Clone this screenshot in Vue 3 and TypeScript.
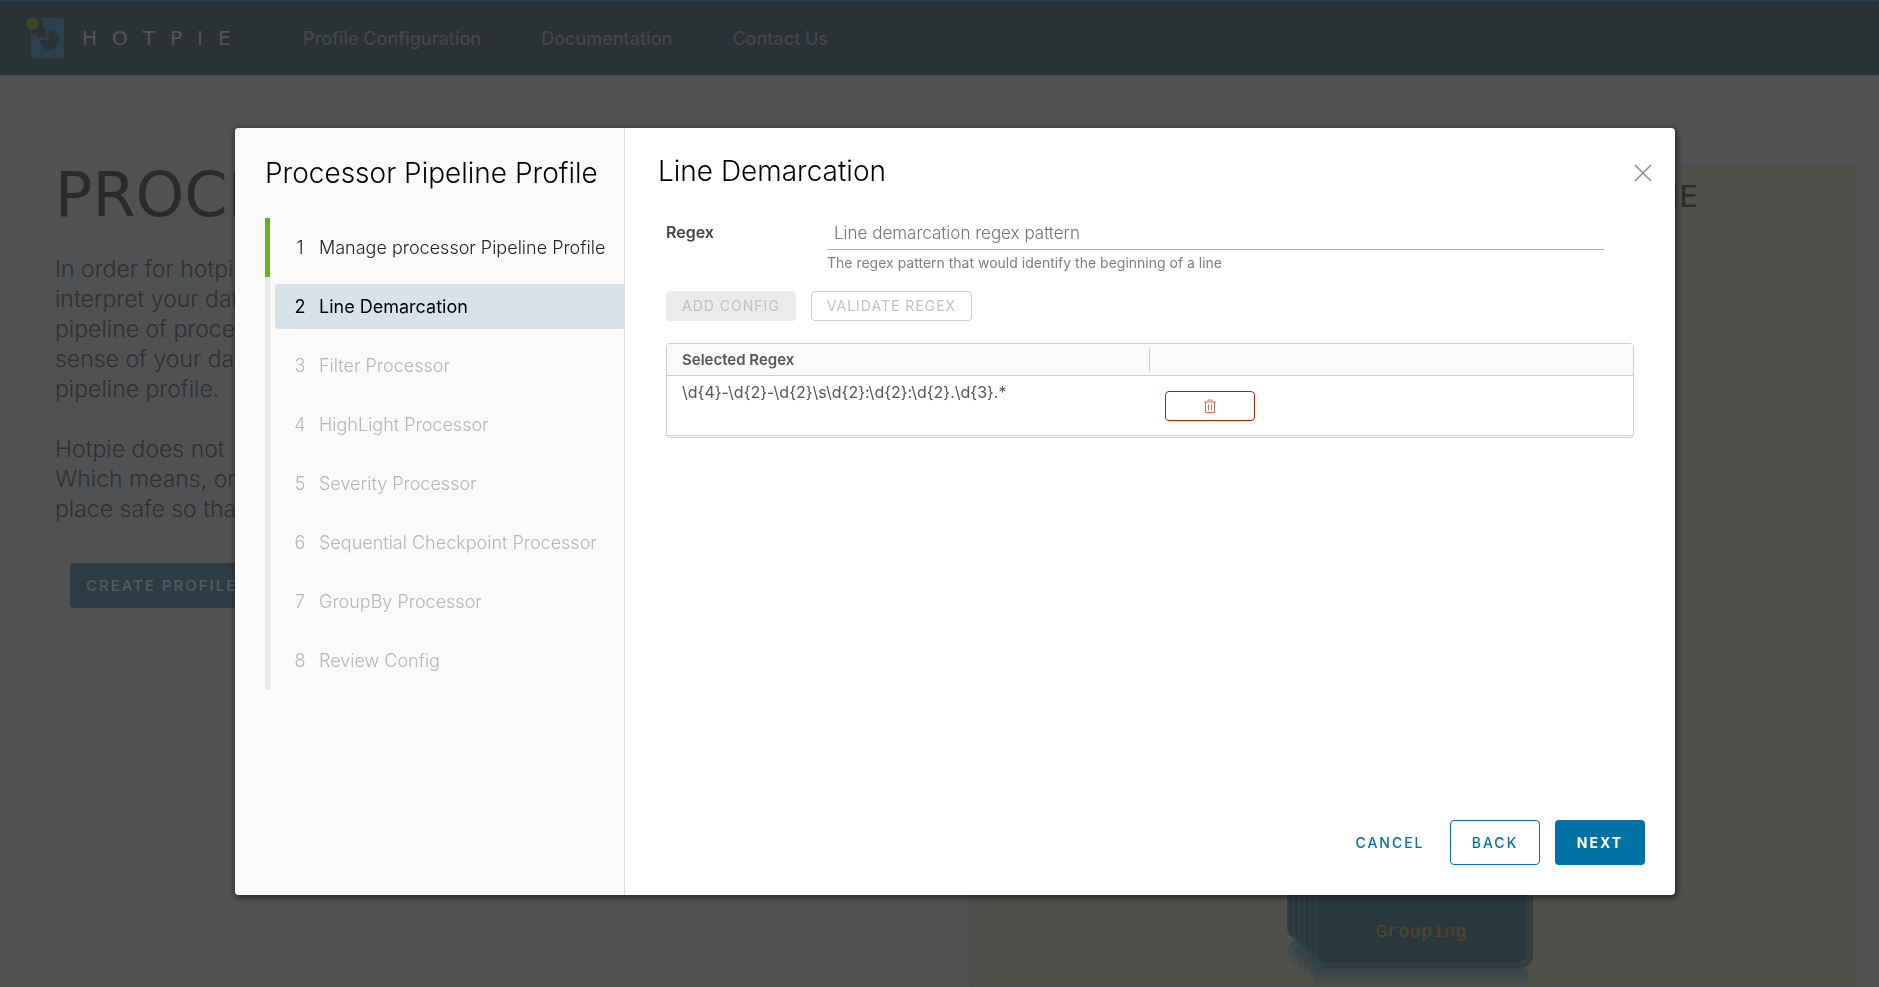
<script setup lang="ts">
import { ref } from 'vue'

interface Step {
  id: number
  label: string
  state: 'done' | 'active' | 'todo'
}

const navLinks: string[] = ['Profile Configuration', 'Documentation', 'Contact Us']

const steps: Step[] = [
  { id: 1, label: 'Manage processor Pipeline Profile', state: 'done' },
  { id: 2, label: 'Line Demarcation', state: 'active' },
  { id: 3, label: 'Filter Processor', state: 'todo' },
  { id: 4, label: 'HighLight Processor', state: 'todo' },
  { id: 5, label: 'Severity Processor', state: 'todo' },
  { id: 6, label: 'Sequential Checkpoint Processor', state: 'todo' },
  { id: 7, label: 'GroupBy Processor', state: 'todo' },
  { id: 8, label: 'Review Config', state: 'todo' },
]

const regex = ref('')
const selected = ref<string[]>(['\\d{4}-\\d{2}-\\d{2}\\s\\d{2}:\\d{2}:\\d{2}.\\d{3}.*'])

const stack: number[] = [0, 1, 2, 3, 4, 5]

function removeRegex(index: number): void {
  selected.value.splice(index, 1)
}
</script>

<template>
  <div class="page">
    <header class="topbar">
      <svg class="logo" width="38" height="42" viewBox="0 0 38 42" aria-hidden="true">
        <path class="logo-card" d="M15 1H36a2 2 0 0 1 2 2V39.500a2 2 0 0 1-2 2H7a2 2 0 0 1-2-2V15.500A9 9 0 0 0 15 1Z" />
        <path class="logo-cut" d="M22.500 12.500A10 10 0 1 1 13 23H22.500Z" />
        <path class="logo-cut" d="M20 10.500V20H10.500A9.500 9.500 0 0 1 20 10.500Z" />
        <circle class="logo-dot" cx="6.500" cy="6.500" r="6.500" />
      </svg>
      <span class="brand">HOTPIE</span>
      <nav class="nav">
        <a v-for="link in navLinks" :key="link" href="#">{{ link }}</a>
      </nav>
    </header>

    <main class="content">
      <section class="intro">
        <h1>PROCESSOR</h1>
        <p>
          In order for hotpie<br />interpret your data<br />pipeline of processors<br />sense of your data<br />pipeline profile.
        </p>
        <p>Hotpie does not<br />Which means, on<br />place safe so that</p>
        <button type="button" class="create">CREATE PROFILE</button>
      </section>

      <section class="panel">
        <h2>PIPELINE</h2>
        <svg class="cards" width="250" height="118" viewBox="0 0 250 118">
          <defs>
            <linearGradient id="fade" x1="0" y1="0" x2="0" y2="1">
              <stop offset="0" stop-color="#2f3e45" stop-opacity="0.8" />
              <stop offset="0.800" stop-color="#3c4546" stop-opacity="0" />
            </linearGradient>
          </defs>
          <rect
            v-for="n in stack" :key="'r' + n"
            :x="n * 5.5" :y="72 + n * 5" width="214" height="30" rx="11" fill="url(#fade)"
          />
          <rect class="card-shadow" x="33" y="3" width="213" height="97" rx="13" />
          <rect
            v-for="n in stack" :key="'c' + n" class="card"
            :x="1 + n * 5.5" :y="n * 5 - 27" width="212" height="98" rx="12"
          />
          <text x="134" y="69" text-anchor="middle">Grouping</text>
        </svg>
      </section>
    </main>

    <div class="overlay">
      <div class="modal" role="dialog" aria-labelledby="wizard-title">
        <aside class="side">
          <h2 id="wizard-title">Processor Pipeline Profile</h2>
          <ol class="steps">
            <li v-for="step in steps" :key="step.id" :class="step.state">
              <button type="button" :disabled="step.state === 'todo'">
                <span class="num">{{ step.id }}</span>
                <span>{{ step.label }}</span>
              </button>
            </li>
          </ol>
        </aside>

        <div class="main">
          <div class="main-head">
            <h3>Line Demarcation</h3>
            <button type="button" class="close" aria-label="Close">
              <svg width="18" height="18" viewBox="0 0 18 18" aria-hidden="true">
                <path d="M1 1 17 17M17 1 1 17" />
              </svg>
            </button>
          </div>

          <div class="body">
            <div class="field">
              <label for="regex">Regex</label>
              <div class="control">
                <input id="regex" v-model="regex" type="text" placeholder="Line demarcation regex pattern" />
                <span class="help">The regex pattern that would identify the beginning of a line</span>
              </div>
            </div>

            <div class="actions">
              <button type="button" class="small filled" disabled>ADD CONFIG</button>
              <button type="button" class="small" disabled>VALIDATE REGEX</button>
            </div>

            <div class="grid">
              <table>
                <thead>
                  <tr>
                    <th scope="col">Selected Regex</th>
                    <th scope="col" aria-label="Actions"><span class="divider"></span></th>
                  </tr>
                </thead>
                <tbody>
                  <tr v-for="(item, index) in selected" :key="item">
                    <td>{{ item }}</td>
                    <td>
                      <button type="button" class="delete" aria-label="Delete" @click="removeRegex(index)">
                        <svg width="12" height="14" viewBox="0 0 12 14" aria-hidden="true">
                          <path d="M0 3H12M4 2.500V1H8V2.500M1.500 3V13.500H10.500V3M4.500 5.500V11.500M7.500 5.500V11.500" />
                        </svg>
                      </button>
                    </td>
                  </tr>
                </tbody>
              </table>
            </div>
          </div>

          <footer class="foot">
            <button type="button" class="btn link">CANCEL</button>
            <button type="button" class="btn outline">BACK</button>
            <button type="button" class="btn primary">NEXT</button>
          </footer>
        </div>
      </div>
    </div>
  </div>
</template>

<style>
body {
  margin: 0;
  background: #505153;
}
</style>

<style scoped>
* {
  box-sizing: border-box;
}
.page {
  display: flex;
  flex-direction: column;
  height: 100vh;
  overflow: hidden;
  background: #505153;
  font-family: Inter, "Open Sans", sans-serif;
}
h1,
h2,
h3,
p,
ol {
  margin: 0;
  padding: 0;
}
button {
  font-family: inherit;
  padding: 0;
  border: 0;
  background: none;
  cursor: pointer;
}
button:disabled {
  cursor: default;
}

/* top bar */
.topbar {
  display: flex;
  flex: none;
  align-items: center;
  height: 75px;
  padding-left: 26px;
  border-top: 1px solid #2f3d4c;
  background: #2c3336;
}
.logo-card {
  fill: #2c414d;
}
.logo-cut {
  fill: #2c3336;
}
.logo-dot {
  fill: #3a4729;
}
.brand {
  width: 192px;
  margin-left: 18px;
  color: #545657;
  font: 20px/24px "DejaVu Sans", sans-serif;
  letter-spacing: 15px;
}
.nav {
  display: flex;
  align-items: center;
  gap: 60px;
  height: 50px;
  padding-left: 28px;
  border-left: 1px solid #31383b;
}
.nav a {
  color: #43494b;
  font-size: 18px;
  font-weight: 500;
  text-decoration: none;
}

/* page behind the dialog */
.content {
  display: grid;
  flex: 1;
  grid-template-columns: 1fr 885px;
  gap: 24px;
  padding: 90px 24px 0 55px;
  min-height: 0;
}
.intro {
  min-width: 0;
  overflow: hidden;
}
h1 {
  color: #2b2b2b;
  font: 62px/60px "DejaVu Sans", sans-serif;
}
.intro p {
  margin-bottom: 30px;
  color: #2e2f30;
  font-size: 23px;
  font-weight: 300;
  line-height: 30px;
  white-space: nowrap;
}
h1 + p {
  margin-top: 29px;
}
.create {
  height: 45px;
  margin: 9px 15px;
  padding: 0 16px;
  border-radius: 4px;
  background: #2c3c45;
  color: #545b5f;
  font-size: 15px;
  font-weight: 500;
  letter-spacing: 2px;
}
.panel {
  display: flex;
  flex-direction: column;
  justify-content: space-between;
  border: 1px solid #4b4c4b;
  border-radius: 4px 4px 0 0;
  background: #4f504a;
}
.panel h2 {
  height: 62px;
  padding-right: 156px;
  border-bottom: 1px solid #4a4b46;
  color: #2b2b2b;
  font: 30px/62px "DejaVu Sans", sans-serif;
  text-align: right;
}
.cards {
  margin-left: 316px;
}
.card {
  fill: #2b383d;
  stroke: #303f48;
  stroke-width: 2;
}
.card-shadow {
  fill: #3a3a38;
}
.cards text {
  fill: #54452d;
  font: 19px "Liberation Mono", monospace;
}

/* dialog */
.overlay {
  position: fixed;
  inset: 0;
  display: flex;
  align-items: center;
  justify-content: center;
  padding: 36px 0 0 31px;
}
.modal {
  display: flex;
  width: 90%;
  max-width: 1440px;
  height: calc(100vh - 220px);
  overflow: hidden;
  border-radius: 4px;
  background: #fff;
  box-shadow: 1px 2px 4px 2px rgba(30, 30, 30, 0.6);
}
.side {
  flex: none;
  width: 390px;
  padding: 28px 0 0 30px;
  border-right: 1px solid #dedede;
  background: #fafafa;
}
.side h2,
h3 {
  color: #000;
  font-size: 28px;
  font-weight: 300;
  line-height: 34px;
  white-space: nowrap;
}
.steps {
  margin-top: 28px;
  list-style: none;
}
.steps li {
  height: 59px;
  padding: 7px 0 7px 5px;
  border-left: 5px solid #e8e8e8;
}
.steps li.done {
  border-left-color: #60b515;
}
.steps button {
  display: flex;
  align-items: center;
  gap: 10px;
  width: 100%;
  height: 45px;
  padding-left: 16px;
  border-radius: 4px 0 0 4px;
  color: #b5b5b5;
  font-size: 18px;
  font-weight: 300;
  line-height: 24px;
  white-space: nowrap;
}
.num {
  width: 18px;
  text-align: center;
}
.steps .done button {
  color: #222;
}
.steps .active button {
  background: #d8e3e9;
  color: #000;
  font-weight: 400;
}
.main {
  display: flex;
  flex: 1;
  flex-direction: column;
  min-width: 0;
  padding: 26px 30px 30px 33px;
}
.main-head {
  display: flex;
  align-items: flex-start;
  justify-content: space-between;
  height: 62px;
}
.close {
  width: 18px;
  height: 18px;
  margin: 10px -7px 0 0;
}
.close svg {
  display: block;
  fill: none;
  stroke: #8c8c8c;
  stroke-width: 1.5;
}
.body {
  flex: 1;
  padding: 0 11px 0 8px;
}
.field {
  display: flex;
  padding-right: 30px;
}
.field label {
  flex: none;
  width: 161px;
  color: #454545;
  font-size: 16px;
  font-weight: 600;
  line-height: 32px;
}
.control {
  flex: 1;
}
input {
  display: block;
  width: 100%;
  height: 34px;
  padding: 0 7px;
  border: 0;
  border-bottom: 1px solid #b3b3b3;
  outline: 0;
  background: none;
  color: #333;
  font: 300 17px/24px Inter, sans-serif;
}
input::placeholder {
  color: #737373;
  opacity: 1;
}
.help {
  display: block;
  margin-top: 3px;
  color: #808080;
  font-size: 14px;
  line-height: 20px;
}
.actions {
  display: flex;
  gap: 15px;
  margin: 18px 0 22px;
}
.small {
  height: 30px;
  padding: 0 15px;
  border: 1px solid #ccc;
  border-radius: 4px;
  color: #c1c1c1;
  font-size: 14px;
  line-height: 26px;
  letter-spacing: 1px;
}
.small.filled {
  border-color: #ebebeb;
  background: #ebebeb;
}
.grid {
  padding-bottom: 1px;
  border: 1px solid #ccc;
  border-radius: 4px;
}
table {
  width: 100%;
  border-collapse: separate;
  border-spacing: 0;
  table-layout: fixed;
}
th,
td {
  width: 50%;
  padding: 0 15px;
  border-bottom: 1px solid #ccc;
  text-align: left;
  vertical-align: top;
}
th {
  height: 32px;
  background: #fafafa;
  color: #565656;
  font-size: 15px;
  font-weight: 600;
  line-height: 31px;
}
.divider {
  display: block;
  height: 24px;
  margin: 4px 0 0 -16px;
  border-left: 1px solid #ccc;
}
td {
  height: 60px;
  padding-top: 5px;
  color: #565656;
  font-size: 16px;
  line-height: 22px;
}
.delete {
  display: flex;
  align-items: center;
  justify-content: center;
  width: 90px;
  height: 30px;
  margin-top: 10px;
  border: 1px solid #c21d00;
  border-radius: 4px;
}
.delete path {
  fill: none;
  stroke: #e06a54;
}
.foot {
  display: flex;
  justify-content: flex-end;
  gap: 15px;
}
.btn {
  min-width: 90px;
  height: 45px;
  border: 1px solid transparent;
  border-radius: 4px;
  color: #0072a3;
  font-size: 14px;
  font-weight: 500;
  letter-spacing: 2px;
}
.btn.outline {
  border-color: #0072a3;
}
.btn.primary {
  background: #0072a3;
  color: #fff;
  font-weight: 700;
}
</style>
